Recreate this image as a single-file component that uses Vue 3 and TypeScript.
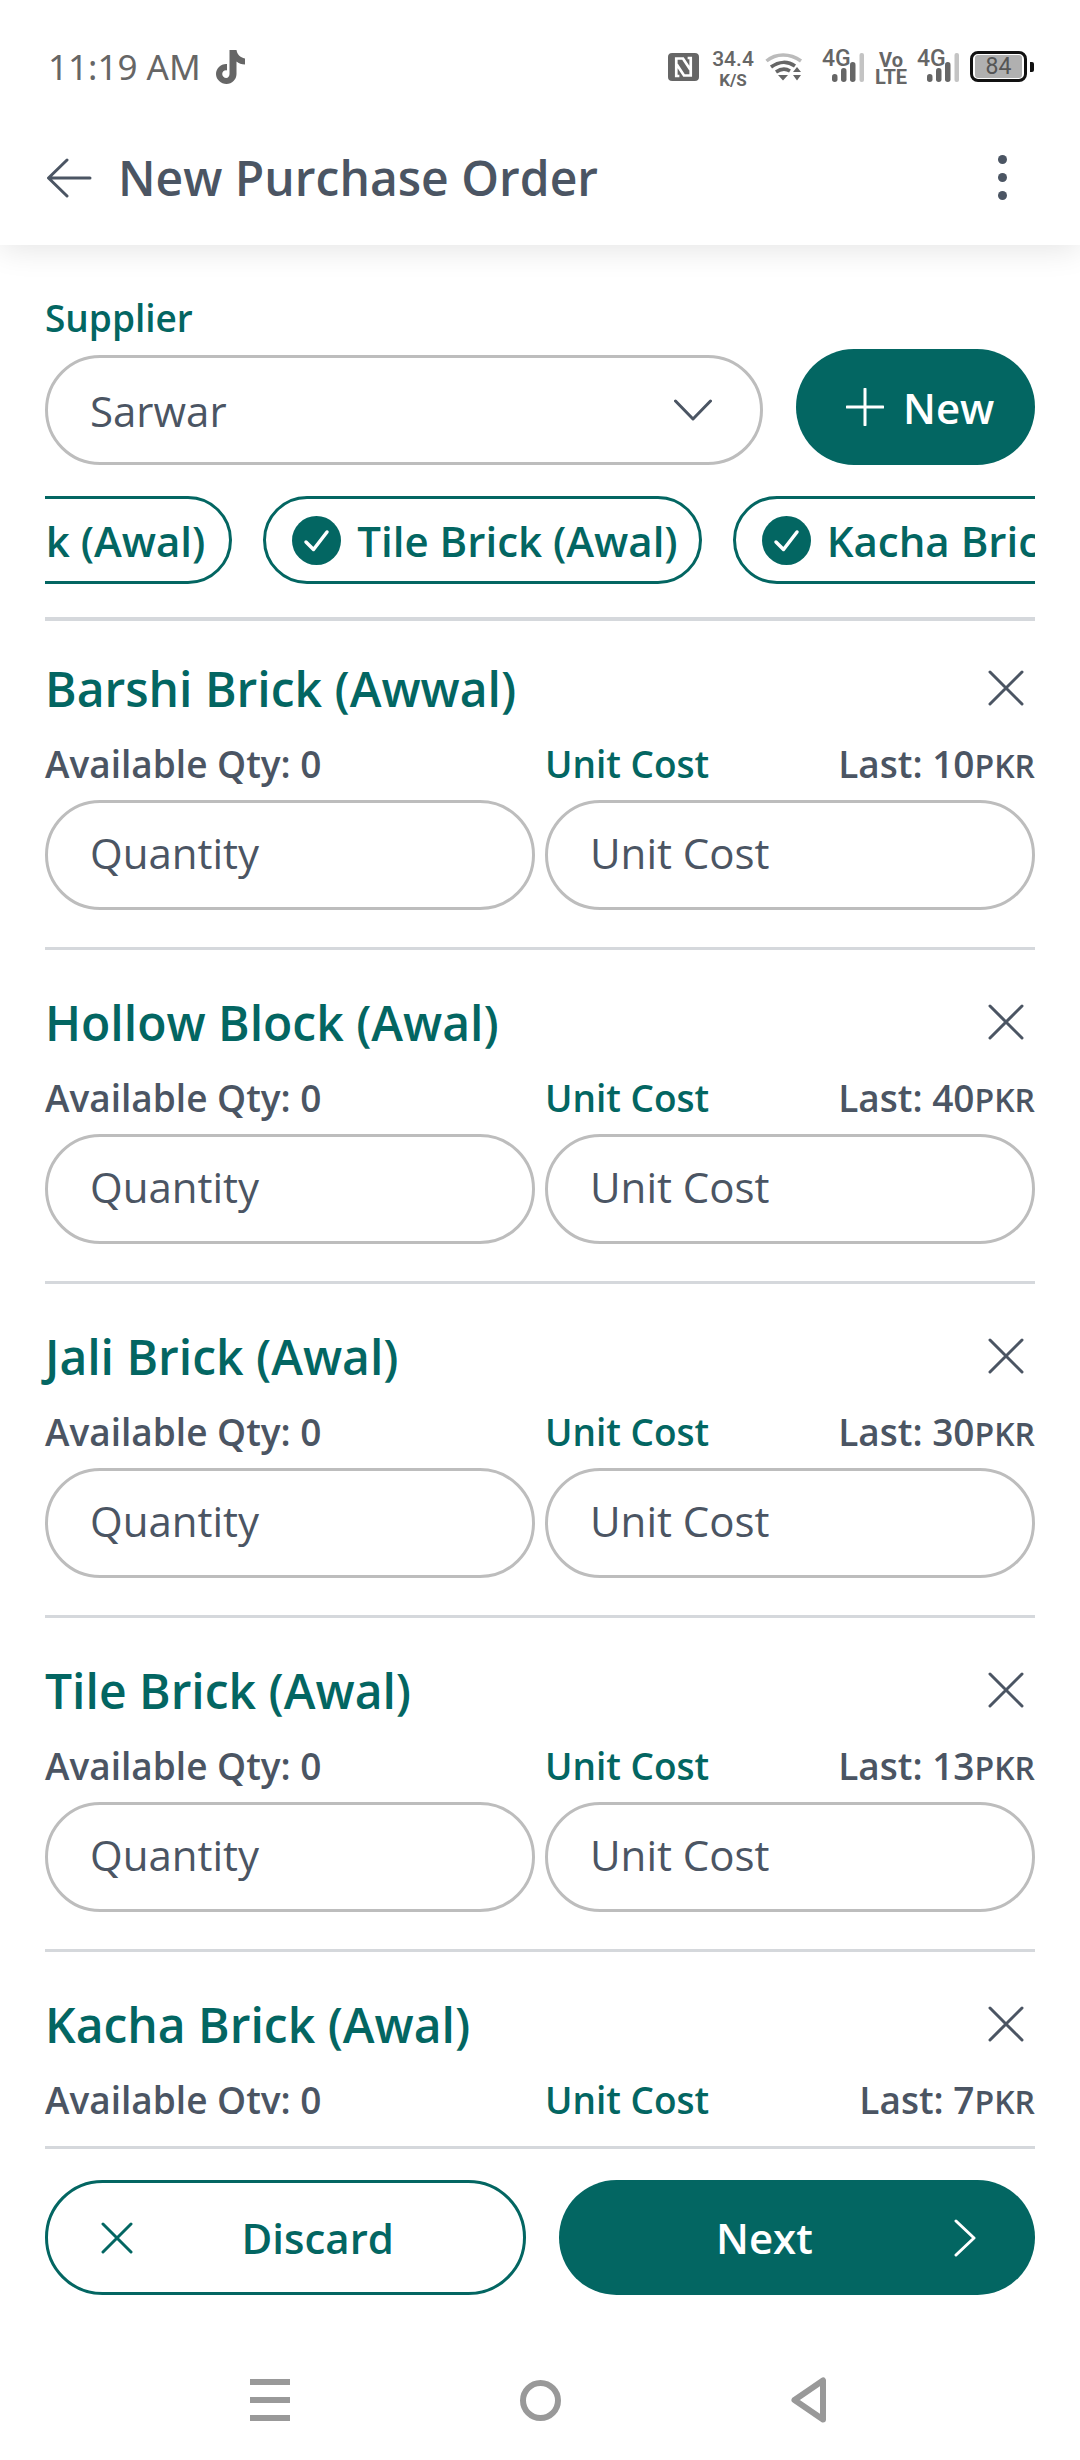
<script setup lang="ts">
interface Item { name: string; last: number }
const items: Item[] = [
  { name: 'Barshi Brick (Awwal)', last: 10 },
  { name: 'Hollow Block (Awal)', last: 40 },
  { name: 'Jali Brick (Awal)', last: 30 },
  { name: 'Tile Brick (Awal)', last: 13 },
  { name: 'Kacha Brick (Awal)', last: 7 },
]
const chips = ['Jali Brick (Awal)', 'Tile Brick (Awal)', 'Kacha Brick (Awal)']
</script>

<template>
  <div class="screen">
    <header class="top">
      <div class="status">
        <div class="time-wrap">
          <span class="time">11:19 AM</span>
          <svg class="tiktok" width="30" height="34" viewBox="0 0 30 34"><path fill="#666" d="M13.500 0h7c.6 4 3.500 7.500 8.500 8.500v6c-3.300 0-6.300-1-8.500-3V24c0 5.500-4.500 10-10 10S0 29.500 0 24c0-5.800 5-10.500 11-10v6.400c-2.500-.6-4.800 1.200-4.800 3.600 0 2.200 1.900 4 4 4 2 0 3.300-1.800 3.300-4z"/></svg>
        </div>
        <div class="icons">
          <svg class="nfc" width="31" height="28" viewBox="0 0 30 28" preserveAspectRatio="none"><rect width="30" height="28" rx="4" fill="#666"/><path d="M11 23H8V5.500h6.500l7 11M19 5h3v17.500h-6.500l-7-11" fill="none" stroke="#fff" stroke-width="2.600"/></svg>
          <div class="speed"><span class="speed-top">34.4</span><span class="speed-bot">K/S</span></div>
          <svg class="wifi" width="38" height="29" viewBox="0 0 38 29">
            <path d="M1.500 9C11 1 25 1 36 9" fill="none" stroke="#bbb" stroke-width="3.500"/>
            <path d="M6 15c8-6 17-6 24-1M11 20c5-3.500 10-3.500 14-1" fill="none" stroke="#666" stroke-width="3.500"/>
            <path d="M13 23h10l-5 5.500zM28 20l4-5 4 5zM28 23h8l-4 5.500z" fill="#666"/>
          </svg>
          <div class="net">
            <span class="g4">4G</span>
            <svg class="bars" width="33" height="30" viewBox="0 0 33 30"><rect x="0" y="21" width="5.500" height="8" rx="2.700" fill="#666"/><rect x="9" y="15" width="5.500" height="14" rx="2.700" fill="#666"/><rect x="18" y="9" width="5.500" height="20" rx="2.700" fill="#666"/><rect x="27.500" y="0" width="4.500" height="29" rx="2" fill="#c4c4c4"/></svg>
          </div>
          <div class="volte"><span>Vo</span><span>LTE</span></div>
          <div class="net">
            <span class="g4">4G</span>
            <svg class="bars" width="33" height="30" viewBox="0 0 33 30"><rect x="0" y="21" width="5.500" height="8" rx="2.700" fill="#666"/><rect x="9" y="15" width="5.500" height="14" rx="2.700" fill="#666"/><rect x="18" y="9" width="5.500" height="20" rx="2.700" fill="#666"/><rect x="27.500" y="0" width="4.500" height="29" rx="2" fill="#c4c4c4"/></svg>
          </div>
          <div class="battery"><div class="cell"><span class="level">84</span></div><i class="nub"></i></div>
        </div>
      </div>
      <div class="bar">
        <svg class="back" width="46" height="40" viewBox="0 0 46 40"><path d="M21 2 2.500 20 21 38M3 20h41" fill="none" stroke="#4b5563" stroke-width="3" stroke-linecap="round" stroke-linejoin="round"/></svg>
        <span class="title">New Purchase Order</span>
        <div class="dots"><i></i><i></i><i></i></div>
      </div>
    </header>

    <main class="body">
      <div class="fixed">
        <div class="label">Supplier</div>
        <div class="supplier-row">
          <div class="field select">
            <span>Sarwar</span>
            <svg width="38" height="22" viewBox="0 0 38 22"><path d="M1.500 2 19 20 36.500 2" fill="none" stroke="#4b5563" stroke-width="3" stroke-linecap="round" stroke-linejoin="round"/></svg>
          </div>
          <button class="new">
            <svg width="38" height="38" viewBox="0 0 38 38"><path d="M19 1v36M1 19h36" stroke="#fff" stroke-width="3" stroke-linecap="round"/></svg>
            <span>New</span>
          </button>
        </div>
        <div class="chips">
          <div v-for="c in chips" :key="c" class="chip">
            <svg width="49" height="49" viewBox="0 0 49 49"><circle cx="24.500" cy="24.500" r="24.500" fill="#036662"/><path d="m14 26 7.500 7.500L35 16" fill="none" stroke="#fff" stroke-width="3.500" stroke-linecap="round" stroke-linejoin="round"/></svg>
            <span>{{ c }}</span>
          </div>
        </div>
        <div class="rule"></div>
      </div>

      <div class="scroll">
        <div class="list">
          <section v-for="it in items" :key="it.name" class="item">
            <div class="item-head">
              <h2>{{ it.name }}</h2>
              <svg width="36" height="36" viewBox="0 0 36 36"><path d="M2 2l32 32M34 2 2 34" stroke="#4b5563" stroke-width="3" stroke-linecap="round"/></svg>
            </div>
            <div class="cols meta">
              <div class="avail">Available Qty: 0</div>
              <div class="cost-meta">
                <span class="unit">Unit Cost</span>
                <span class="last">Last: {{ it.last }}<small>PKR</small></span>
              </div>
            </div>
            <div class="cols">
              <div class="field">Quantity</div>
              <div class="field">Unit Cost</div>
            </div>
          </section>
        </div>
      </div>

      <footer class="foot">
        <div class="rule"></div>
        <div class="actions">
          <button class="btn discard">
            <svg width="32" height="32" viewBox="0 0 32 32"><path d="M2 2l28 28M30 2 2 30" stroke="#036662" stroke-width="3" stroke-linecap="round"/></svg>
            <span>Discard</span>
          </button>
          <button class="btn next">
            <span>Next</span>
            <svg width="22" height="38" viewBox="0 0 22 38"><path d="M2 2l18 17L2 36" fill="none" stroke="#fff" stroke-width="3" stroke-linecap="round" stroke-linejoin="round"/></svg>
          </button>
        </div>
        <nav class="nav">
          <div class="burger"><i></i><i></i><i></i></div>
          <div class="ring"></div>
          <svg width="36" height="46" viewBox="0 0 36 46"><path d="M32 3.500v39L3.500 23z" fill="none" stroke="#999" stroke-width="6" stroke-linejoin="round"/></svg>
        </nav>
      </footer>
    </main>
  </div>
</template>

<style>
html, body { margin: 0; background: #fff; }
</style>

<style scoped>
.screen {
  width: 1080px;
  height: 2460px;
  display: flex;
  flex-direction: column;
  background: #fff;
  overflow: hidden;
  font-family: "Open Sans", "Noto Sans", sans-serif;
  color: #4b5563;
}
.top {
  height: 245px;
  flex: none;
  background: #fff;
  box-shadow: 0 4px 30px rgba(0, 0, 0, 0.11);
  position: relative;
  z-index: 1;
}
.status {
  height: 130px;
  box-sizing: border-box;
  padding: 49px 48px 0 48px;
  display: flex;
  justify-content: space-between;
  align-items: flex-start;
}
.time-wrap { display: flex; align-items: center; gap: 15px; }
.time { font-size: 35px; line-height: 36px; color: #666; font-family: "Noto Sans", sans-serif; }
.icons { display: flex; align-items: flex-start; font-family: Roboto, sans-serif; color: #666; margin-right: -2px; }
.nfc { margin-top: 4px; }
.speed { display: flex; flex-direction: column; align-items: center; width: 40px; margin-left: 14px; font-weight: 500; }
.speed-top { font-size: 21px; line-height: 20px; }
.speed-bot { font-size: 17px; line-height: 17px; font-weight: 700; margin-top: 3px; }
.wifi { margin: 3px 0 0 12px; }
.net { position: relative; width: 42px; height: 34px; margin-left: 19px; }
.g4 { position: absolute; left: 0; top: 0; font-size: 23px; line-height: 20px; font-weight: 500; }
.bars { position: absolute; left: 10px; top: 4px; }
.net + .volte { margin-left: 12px; }
.volte { display: flex; flex-direction: column; align-items: center; width: 30px; font-size: 20px; line-height: 17px; font-weight: 700; margin-top: 3px; }
.volte + .net { margin-left: 11px; }
.battery { display: flex; align-items: center; margin-left: 11px; margin-top: 2px; }
.cell { display: flex; align-items: center; justify-content: center; width: 57px; height: 31px; box-sizing: border-box; border: 3px solid #111; border-radius: 8px; }
.level { display: block; width: 47px; height: 23px; background: #b0b0b0; border-radius: 3px; font-size: 23px; line-height: 24px; text-align: center; color: #555; }
.nub { width: 4px; height: 10px; background: #111; border-radius: 0 2px 2px 0; margin-left: 3px; }
.bar {
  height: 115px;
  box-sizing: border-box;
  padding: 0 46px;
  display: flex;
  align-items: center;
  padding-bottom: 20px;
}
.back { flex: none; }
.title { margin-left: 26px; font-size: 48px; font-weight: 600; color: #4b5563; flex: 1; }
.dots { display: flex; flex-direction: column; gap: 9px; margin-right: 27px; }
.dots i { width: 9px; height: 9px; border-radius: 50%; background: #4b5563; display: block; }

.body { flex: 1; min-height: 0; display: flex; flex-direction: column; }
.fixed { flex: none; padding: 48px 45px 0; }
.label { font-size: 37px; line-height: 50px; font-weight: 600; color: #036662; }
.supplier-row { display: flex; align-items: flex-end; justify-content: space-between; margin-top: 6px; }
.field {
  box-sizing: border-box;
  height: 110px;
  border: 3px solid #bdbdbd;
  border-radius: 55px;
  padding: 0 42px 5px;
  display: flex;
  align-items: center;
  font-size: 42px;
  color: #4b5563;
  background: #fff;
}
.select { width: 718px; justify-content: space-between; padding-right: 48px; padding-bottom: 0; }
.new {
  width: 239px;
  height: 116px;
  border: 0;
  border-radius: 58px;
  background: #036662;
  color: #fff;
  font: 600 42px "Open Sans", sans-serif;
  display: flex;
  align-items: center;
  padding: 0 0 0 50px;
  gap: 19px;
}
.chips { display: flex; gap: 31px; margin-top: 31px; overflow: hidden; }
.chip {
  flex: none;
  box-sizing: border-box;
  height: 88px;
  border: 3px solid #036662;
  border-radius: 44px;
  padding: 0 21px 0 26px;
  display: flex;
  align-items: center;
  gap: 16px;
  font-size: 42px;
  font-weight: 600;
  color: #036662;
  background: #fff;
}
.chip:first-child { margin-left: -243px; padding-right: 24px; }
.rule { height: 3px; background: #d5d8dc; }
.fixed > .rule { margin-top: 33px; height: 4px; }

.scroll { flex: 1; min-height: 0; overflow: hidden; padding: 0 45px; }
.list { margin-top: -5px; }
.item { height: 334px; box-sizing: border-box; padding-top: 49px; border-bottom: 3px solid #d5d8dc; }
.item-head { display: flex; justify-content: space-between; align-items: center; height: 48px; padding-right: 11px; }
.item-head svg { position: relative; top: -1px; }
.item-head h2 { margin: 0; font-size: 48px; line-height: 48px; font-weight: 600; color: #036662; }
.cols { display: grid; grid-template-columns: 1fr 1fr; gap: 10px; }
.meta { margin-top: 25px; margin-bottom: 15px; height: 47px; align-items: center; font-size: 37px; font-weight: 600; }
.cost-meta { display: flex; justify-content: space-between; align-items: baseline; }
.unit { color: #036662; }
.last small { font-size: 32px; font-weight: 600; }

.foot { flex: none; height: 346px; box-sizing: border-box; padding: 32px 45px 0; }
.actions { display: flex; justify-content: space-between; margin-top: 31px; }
.btn {
  box-sizing: border-box;
  height: 115px;
  border-radius: 58px;
  font: 600 42px "Open Sans", sans-serif;
  display: flex;
  align-items: center;
  justify-content: space-between;
}
.discard { width: 481px; background: #fff; border: 3px solid #036662; color: #036662; padding: 0 129px 0 53px; }
.next { width: 476px; background: #036662; border: 0; color: #fff; padding: 0 59px 0 157px; }
.nav { display: flex; justify-content: center; align-items: center; gap: 230px; margin-top: 82px; margin-left: -4px; }
.burger { display: flex; flex-direction: column; gap: 12px; width: 40px; }
.burger i { display: block; height: 6px; background: #999; }
.ring { box-sizing: border-box; width: 41px; height: 41px; border: 6px solid #999; border-radius: 50%; }
</style>
